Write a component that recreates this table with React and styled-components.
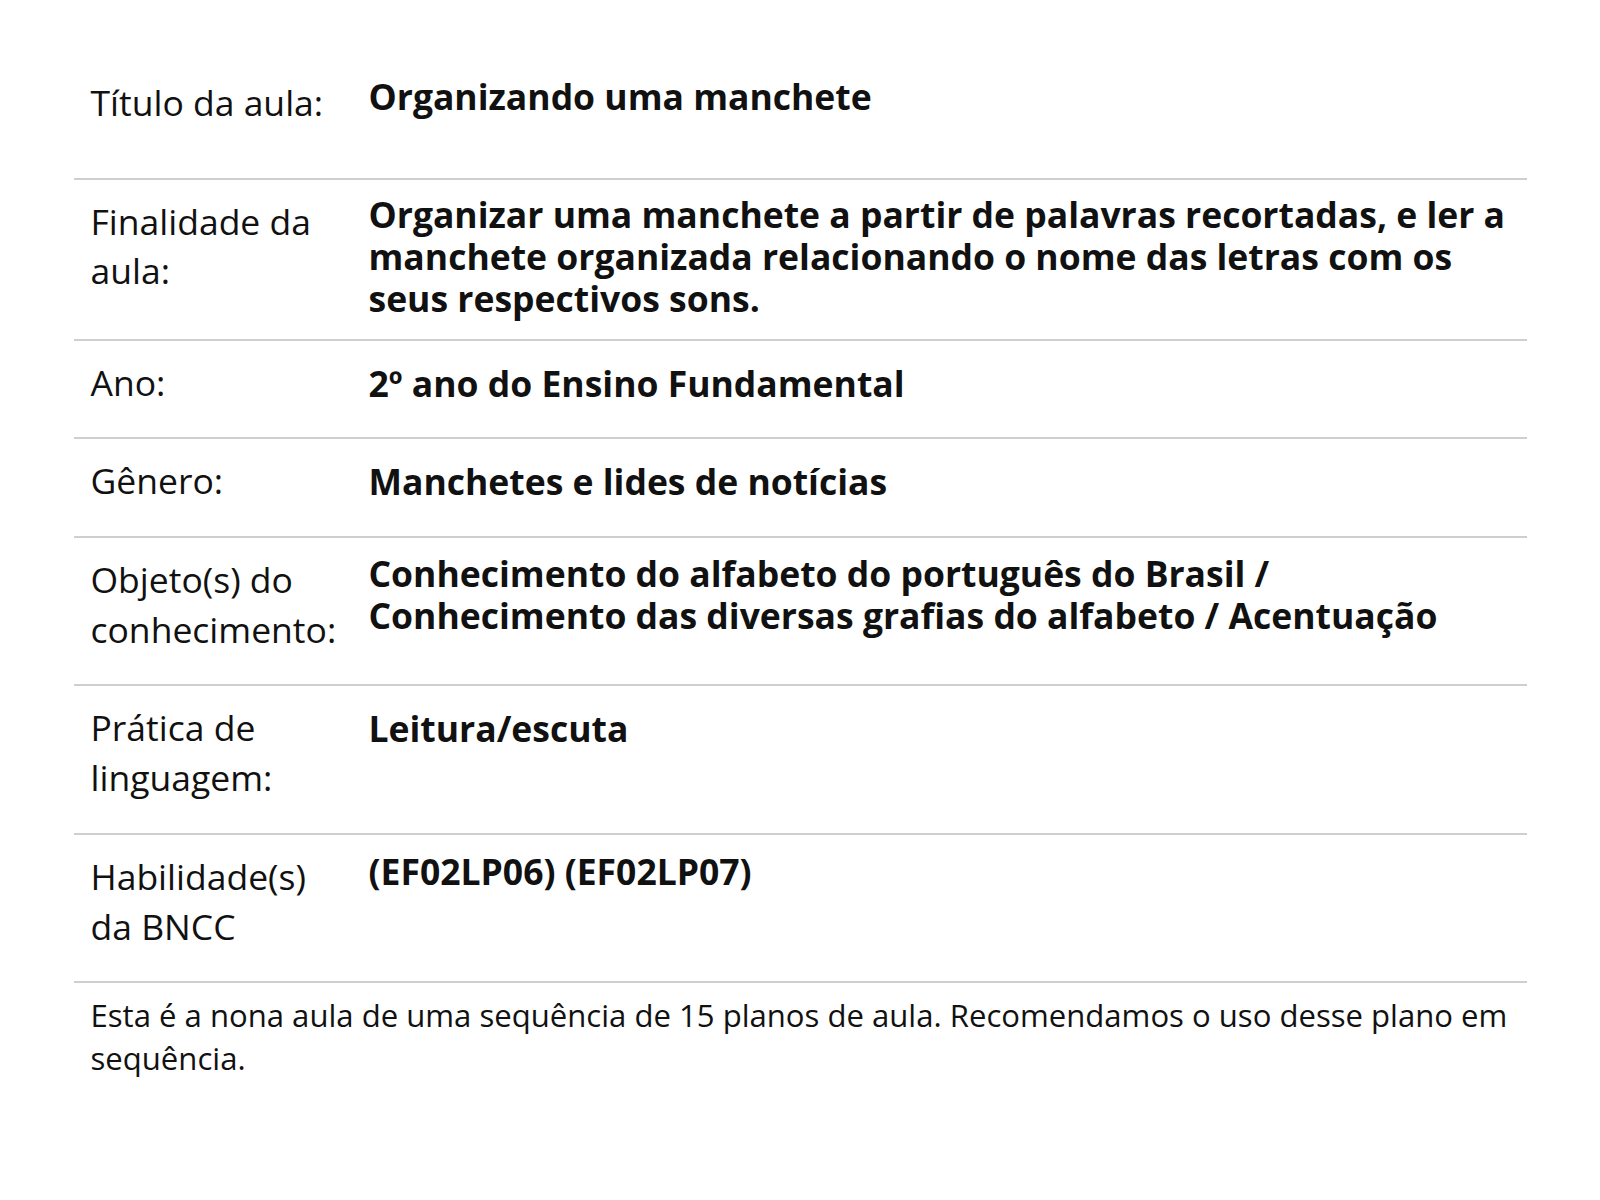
import styled, { createGlobalStyle } from 'styled-components';

const GlobalStyle = createGlobalStyle`
  body {
    margin: 0;
    background: #fff;
    color: #111;
    font-family: 'Open Sans', 'Noto Sans', sans-serif;
  }
`;

const StyledPage = styled.div`
  width: 1453px;
  margin: 0 auto;
  padding-top: 61px;
`;

const StyledRow = styled.div`
  display: grid;
  grid-template-columns: 295px 1fr;
  align-items: start;
  border-bottom: 2px solid #cfcfcf;
  padding-bottom: ${({ $extra }) => $extra || 0}px;
`;

const StyledLabel = styled.div`
  padding: 17px 22px 30px 17px;
  font-size: 35.5px;
  line-height: 1.4;
  font-weight: 400;
`;

const StyledValue = styled.div`
  padding: ${({ $top }) => $top}px 16px 20px 0;
  font-size: 35.5px;
  line-height: 42px;
  font-weight: 700;
`;

const StyledNote = styled.p`
  margin: 0;
  padding: 11px 0 0 17px;
  font-size: 31.1px;
  line-height: 42.6px;
`;

const rows = [
  { label: 'Título da aula:', value: 'Organizando uma manchete', top: 14, extra: 20 },
  {
    label: 'Finalidade da aula:',
    value:
      'Organizar uma manchete a partir de palavras recortadas, e ler a manchete organizada relacionando o nome das letras com os seus respectivos sons.',
    top: 13,
  },
  { label: 'Ano:', value: '2º ano do Ensino Fundamental', top: 21 },
  { label: 'Gênero:', value: 'Manchetes e lides de notícias', top: 21 },
  {
    label: 'Objeto(s) do conhecimento:',
    value:
      'Conhecimento do alfabeto do português do Brasil / Conhecimento das diversas grafias do alfabeto / Acentuação',
    top: 14,
  },
  { label: 'Prática de linguagem:', value: 'Leitura/escuta', top: 21 },
  { label: 'Habilidade(s) da BNCC', value: '(EF02LP06) (EF02LP07)', top: 15 },
];

export default function App() {
  return (
    <>
      <GlobalStyle />
      <StyledPage>
        {rows.map((row) => (
          <StyledRow key={row.label} $extra={row.extra}>
            <StyledLabel>{row.label}</StyledLabel>
            <StyledValue $top={row.top}>{row.value}</StyledValue>
          </StyledRow>
        ))}
        <StyledNote>
          Esta é a nona aula de uma sequência de 15 planos de aula. Recomendamos
          o uso desse plano em sequência.
        </StyledNote>
      </StyledPage>
    </>
  );
}
